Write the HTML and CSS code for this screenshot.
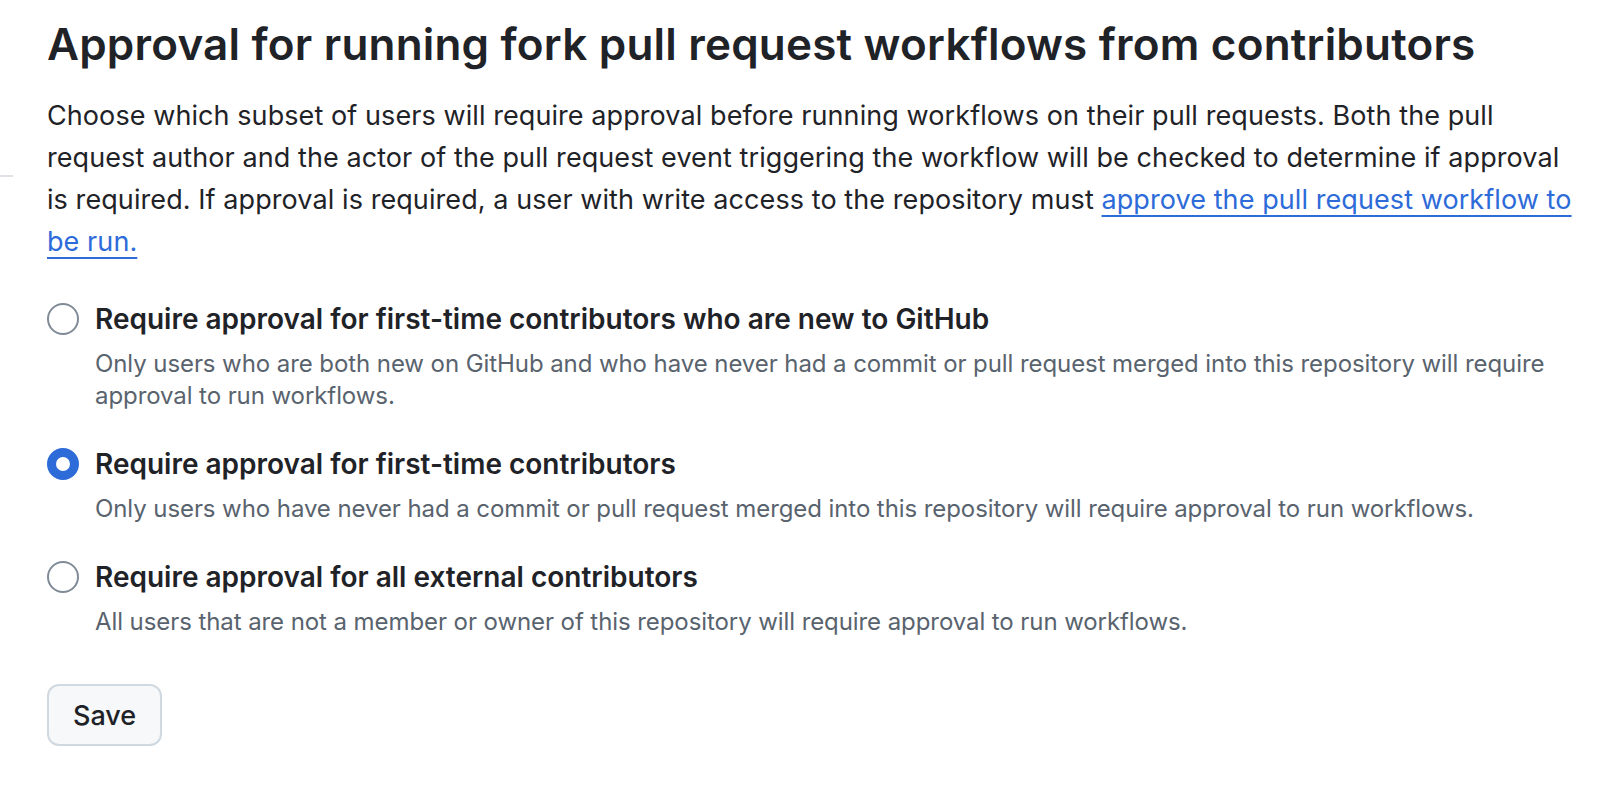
FILE: index.html
```html
<!DOCTYPE html>
<html lang="en">
<head>
<meta charset="utf-8">
<title>Approval for running fork pull request workflows</title>
<link rel="stylesheet" href="styles.css">
</head>
<body>
<div class="page">
  <div class="side"><div class="side-rule"></div></div>
  <main class="main">
    <h2 class="heading">Approval for running fork pull request workflows from contributors</h2>
    <p class="intro">Choose which subset of users will require approval before running workflows on their pull requests. Both the pull request author and the actor of the pull request event triggering the workflow will be checked to determine if approval is required. If approval is required, a user with write access to the repository must <a class="link" href="#">approve the pull request workflow to be run.</a></p>
    <div class="options">
      <label class="option">
        <span class="radio"></span>
        <span class="option-text">
          <span class="option-title">Require approval for first-time contributors who are new to GitHub</span>
          <span class="option-desc">Only users who are both new on GitHub and who have never had a commit or pull request merged into this repository will require approval to run workflows.</span>
        </span>
      </label>
      <label class="option">
        <span class="radio radio-checked"></span>
        <span class="option-text">
          <span class="option-title">Require approval for first-time contributors</span>
          <span class="option-desc">Only users who have never had a commit or pull request merged into this repository will require approval to run workflows.</span>
        </span>
      </label>
      <label class="option">
        <span class="radio"></span>
        <span class="option-text">
          <span class="option-title">Require approval for all external contributors</span>
          <span class="option-desc">All users that are not a member or owner of this repository will require approval to run workflows.</span>
        </span>
      </label>
    </div>
    <button class="btn" type="button">Save</button>
  </main>
</div>
</body>
</html>
```
FILE: styles.css
```css
html, body {
  margin: 0;
  padding: 0;
  background: #ffffff;
}
body {
  font-family: Inter, "Noto Sans", "Liberation Sans", sans-serif;
  color: #1f2328;
}
.page {
  display: flex;
  width: 1622px;
  height: 790px;
  overflow: hidden;
}
.side {
  width: 13px;
  flex: none;
  padding-top: 175px;
}
.side-rule {
  height: 2px;
  background: #dfe3e8;
}
.main {
  flex: none;
  width: 1536px;
  padding-left: 34px;
  padding-top: 14px;
}
.heading {
  margin: 0;
  font-size: 44px;
  line-height: 60px;
  font-weight: 600;
  letter-spacing: 0.2px;
}
.intro {
  margin: 21px 0 0;
  font-size: 27px;
  line-height: 42px;
  letter-spacing: 0.08px;
}
.link {
  color: #2d6bd9;
  text-decoration: underline;
  text-decoration-thickness: 2px;
  text-underline-offset: 6px;
}
.options {
  margin-top: 35px;
  display: flex;
  flex-direction: column;
  gap: 31px;
}
.option {
  display: flex;
  align-items: flex-start;
  gap: 16px;
}
.radio {
  flex: none;
  width: 32px;
  height: 32px;
  box-sizing: border-box;
  border: 2px solid #818b98;
  border-radius: 50%;
  margin-top: 5px;
  background: #fff;
}
.radio-checked {
  border: 9px solid #2d6bd9;
}
.option-text {
  display: flex;
  flex-direction: column;
}
.option-title {
  font-size: 28px;
  line-height: 42px;
  font-weight: 600;
}
.option-desc {
  font-size: 24px;
  line-height: 32px;
  letter-spacing: -0.08px;
  color: #59636e;
  margin-top: 8px;
}
.btn {
  margin-top: 46px;
  height: 62px;
  padding: 0 24px;
  font-family: inherit;
  font-size: 27px;
  font-weight: 500;
  color: #1f2328;
  background: #f6f8fa;
  border: 2px solid #d1d9e0;
  border-radius: 12px;
}
```
